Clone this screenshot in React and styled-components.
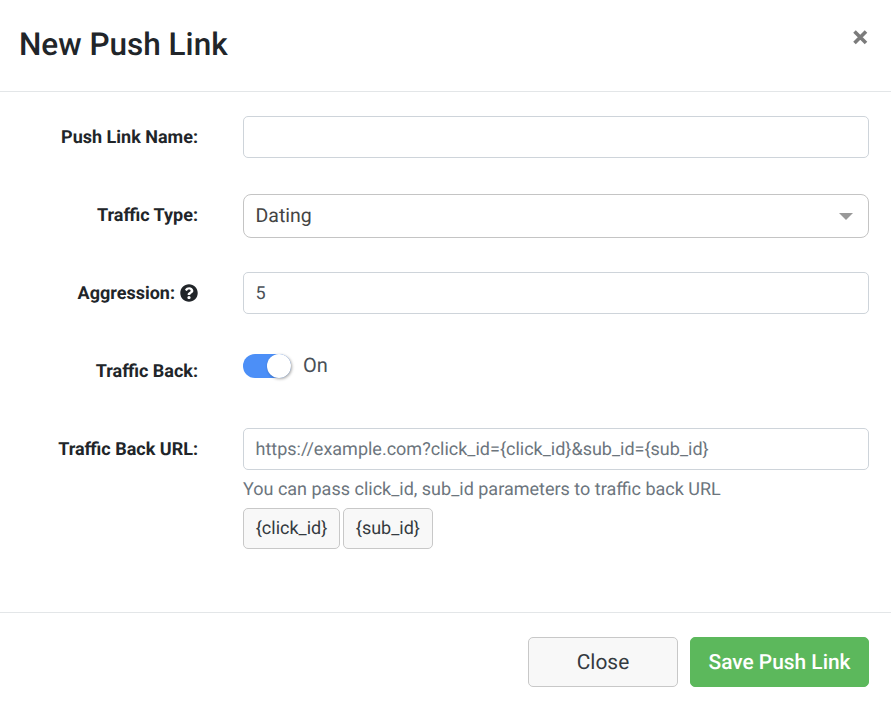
import React from "react";
import styled, { createGlobalStyle } from "styled-components";

const GlobalStyle = createGlobalStyle`
  html, body {
    margin: 0;
    padding: 0;
    background: #fff;
    font-family: Roboto, "Liberation Sans", sans-serif;
    color: #212529;
    text-rendering: geometricPrecision;
  }
  * {
    box-sizing: border-box;
  }
  input, button {
    text-rendering: geometricPrecision;
  }
`;

const Modal = styled.div`
  width: 891px;
  height: 707px;
  background: #fff;
  display: flex;
  flex-direction: column;
`;

const Header = styled.header`
  height: 92px;
  flex: none;
  display: flex;
  justify-content: space-between;
  align-items: flex-start;
  padding: 24px 22px 0 19px;
  border-bottom: 1px solid #e3e6e8;
`;

const Title = styled.h1`
  margin: 0;
  font-size: 31.5px;
  line-height: 42px;
  font-weight: 500;
  color: #212529;
`;

const CloseIcon = styled.button`
  all: unset;
  width: 17px;
  height: 17px;
  margin-top: 5px;
  display: flex;
  color: #7b7b7b;
  cursor: pointer;
`;

const Body = styled.form`
  flex: 1;
  display: flex;
  flex-direction: column;
  gap: 36px;
  padding: 24px 22px 0 0;
`;

const Row = styled.div`
  display: grid;
  grid-template-columns: 198px 626px;
  column-gap: 45px;
  align-items: start;
`;

const Label = styled.label`
  display: flex;
  justify-content: flex-end;
  align-items: center;
  gap: 5px;
  height: 42px;
  font-size: 18px;
  font-weight: 700;
  color: #212529;
`;

const Input = styled.input`
  display: block;
  width: 100%;
  height: 42px;
  padding: 0 11.5px;
  border: 1px solid #ced4da;
  border-radius: 5px;
  background: #fff;
  font: 400 18px Roboto, sans-serif;
  color: #495057;
  outline: none;

  &::placeholder {
    color: #6c757d;
    opacity: 1;
  }
`;

const Select = styled.div`
  height: 44px;
  margin-bottom: -2px;
  padding: 0 12px 2px 11.5px;
  display: flex;
  align-items: center;
  justify-content: space-between;
  border: 1px solid #c4c4c4;
  border-radius: 8px;
  font-size: 19.5px;
  color: #444;
`;

const Caret = styled.span`
  width: 0;
  height: 0;
  margin-right: 3px;
  margin-top: 2px;
  border-left: 7.5px solid transparent;
  border-right: 7.5px solid transparent;
  border-top: 7.5px solid #999;
`;

const ToggleRow = styled.div`
  display: flex;
  align-items: center;
  gap: 12px;
  height: 30px;
`;

const Track = styled.span`
  position: relative;
  display: block;
  width: 48px;
  height: 24px;
  margin-top: 1px;
  border-radius: 12px;
  background: #4c8ff7;
`;

const Knob = styled.span`
  position: absolute;
  top: 0;
  right: 0;
  width: 24px;
  height: 24px;
  border-radius: 50%;
  background: #fff;
  box-shadow: 1px 1px 3px rgba(0, 0, 0, 0.35);
`;

const ToggleText = styled.span`
  font-size: 20px;
  color: #495057;
`;

const Help = styled.div`
  margin-top: 10px;
  font-size: 18px;
  line-height: 20px;
  color: #6c757d;
`;

const Chips = styled.div`
  display: flex;
  gap: 3px;
  margin-top: 8px;
`;

const Chip = styled.button`
  height: 41px;
  padding: 0 11.75px 1px;
  border: 1px solid #c8c8c8;
  border-radius: 5px;
  background: #f8f8f8;
  font: 400 18px Roboto, sans-serif;
  color: #343a40;
`;

const Footer = styled.footer`
  height: 95px;
  flex: none;
  display: flex;
  justify-content: flex-end;
  gap: 12px;
  padding: 24px 22px 0 0;
  border-top: 1px solid #e3e6e8;
`;

const Button = styled.button`
  height: 50px;
  padding: 1px 0 0;
  width: ${(p) => (p.$primary ? "179px" : "150px")};
  border: 1px solid ${(p) => (p.$primary ? "#5cb85c" : "#c8c8c8")};
  border-radius: 5px;
  background: ${(p) => (p.$primary ? "#5cb85c" : "#f8f8f8")};
  color: ${(p) => (p.$primary ? "#fff" : "#343a40")};
  font: ${(p) => (p.$primary ? 500 : 400)} 20.9px Roboto, sans-serif;
`;

const App = () => (
  <Modal>
    <GlobalStyle />
    <Header>
      <Title>New Push Link</Title>
      <CloseIcon aria-label="Close">
        <svg viewBox="0 0 17 17" width="17" height="17">
          <path d="M2.5 2.5L14 14M14 2.5L2.5 14" stroke="currentColor" strokeWidth="3.6" />
        </svg>
      </CloseIcon>
    </Header>
    <Body>
      <Row>
        <Label>Push Link Name:</Label>
        <Input />
      </Row>
      <Row>
        <Label>Traffic Type:</Label>
        <Select>
          Dating
          <Caret />
        </Select>
      </Row>
      <Row>
        <Label>
          Aggression:
          <svg viewBox="0 0 512 512" width="18" height="18">
            <path
              fill="#212529"
              d="M504 256c0 137-111 248-248 248S8 393 8 256 119 8 256 8s248 111 248 248zM262.700 90c-54.500 0-89.300 23-116.500 63.800-3.500 5.300-2.300 12.400 2.800 16.300l34.700 26.300c5.200 3.900 12.600 3 16.700-2.100 17.900-22.700 30.100-35.800 57.300-35.800 20.400 0 45.700 13.100 45.700 33 0 15-12.400 22.700-32.600 34-23.600 13.200-54.800 29.700-54.800 70.900V300c0 6.600 5.400 12 12 12h56c6.600 0 12-5.400 12-12v-1.300c0-28.500 83.400-29.700 83.400-106.900 0-58.100-60.300-101.800-116.700-101.800zM256 338c-25.400 0-46 20.600-46 46 0 25.400 20.600 46 46 46s46-20.600 46-46c0-25.400-20.600-46-46-46z"
            />
          </svg>
        </Label>
        <Input defaultValue="5" />
      </Row>
      <Row>
        <Label>Traffic Back:</Label>
        <ToggleRow>
          <Track>
            <Knob />
          </Track>
          <ToggleText>On</ToggleText>
        </ToggleRow>
      </Row>
      <Row>
        <Label>Traffic Back URL:</Label>
        <div>
          <Input placeholder="https://example.com?click_id={click_id}&sub_id={sub_id}" />
          <Help>You can pass click_id, sub_id parameters to traffic back URL</Help>
          <Chips>
            <Chip type="button">{"{click_id}"}</Chip>
            <Chip type="button">{"{sub_id}"}</Chip>
          </Chips>
        </div>
      </Row>
    </Body>
    <Footer>
      <Button type="button">Close</Button>
      <Button type="button" $primary>
        Save Push Link
      </Button>
    </Footer>
  </Modal>
);

export default App;
